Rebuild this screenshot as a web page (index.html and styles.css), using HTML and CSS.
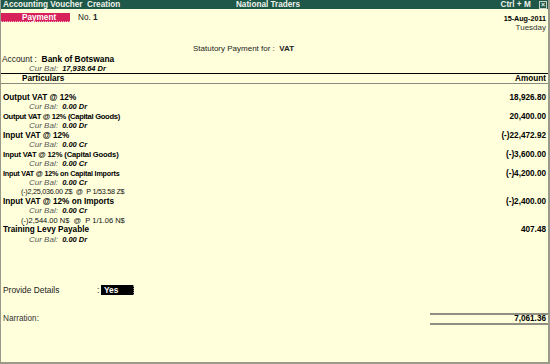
FILE: index.html
```html
<!DOCTYPE html>
<html lang="en">
<head>
  <meta charset="UTF-8" />
  <title>Accounting Voucher Creation</title>
  <link rel="stylesheet" href="styles.css">
</head>
<body>
  <div class="window">
    <div class="titlebar">
      <span class="title-left">Accounting Voucher &nbsp;Creation</span>
      <span class="title-center">National Traders</span>
      <span class="title-right">Ctrl + M <span class="close-box">&times;</span></span>
    </div>

    <div class="voucher-top">
      <div class="vch-left">
        <span class="vch-type">Payment</span>
        <span class="vch-no">No. <b>1</b></span>
      </div>
      <div class="date-block">
        <div class="date">15-Aug-2011</div>
        <div class="day">Tuesday</div>
      </div>
    </div>

    <div class="statutory">Statutory Payment for : &nbsp;<b>VAT</b></div>

    <div class="account">Account : &nbsp;<b>Bank of Botswana</b></div>
    <div class="curbal top-bal"><span class="cb-label">Cur Bal:</span> <span class="cb-value">17,938.64 Dr</span></div>

    <div class="col-head">
      <span class="col-particulars">Particulars</span>
      <span class="col-amount">Amount</span>
    </div>

    <div class="entries">
      <div class="line ledger"><span>Output VAT @ 12%</span><span class="amt">18,926.80</span></div>
      <div class="line curbal"><span class="cb-label">Cur Bal:</span> <span class="cb-value">0.00 Dr</span></div>
      <div class="line ledger"><span class="narrow n1">Output VAT @ 12% (Capital Goods)</span><span class="amt">20,400.00</span></div>
      <div class="line curbal"><span class="cb-label">Cur Bal:</span> <span class="cb-value">0.00 Dr</span></div>
      <div class="line ledger"><span>Input VAT @ 12%</span><span class="amt">(-)22,472.92</span></div>
      <div class="line curbal"><span class="cb-label">Cur Bal:</span> <span class="cb-value">0.00 Cr</span></div>
      <div class="line ledger"><span class="narrow n2">Input VAT @ 12% (Capital Goods)</span><span class="amt">(-)3,600.00</span></div>
      <div class="line curbal"><span class="cb-label">Cur Bal:</span> <span class="cb-value">0.00 Cr</span></div>
      <div class="line ledger"><span class="narrow n3">Input VAT @ 12% on Capital Imports</span><span class="amt">(-)4,200.00</span></div>
      <div class="line curbal"><span class="cb-label">Cur Bal:</span> <span class="cb-value">0.00 Cr</span></div>
      <div class="line forex tight">(-)2,25,036.00 Z$  @  P 1/53.58 Z$</div>
      <div class="line ledger"><span>Input VAT @ 12% on Imports</span><span class="amt">(-)2,400.00</span></div>
      <div class="line curbal"><span class="cb-label">Cur Bal:</span> <span class="cb-value">0.00 Cr</span></div>
      <div class="line forex">(-)2,544.00 N$  @  P 1/1.06 N$</div>
      <div class="line ledger"><span>Training Levy Payable</span><span class="amt">407.48</span></div>
      <div class="line curbal"><span class="cb-label">Cur Bal:</span> <span class="cb-value">0.00 Dr</span></div>
    </div>

    <div class="provide">
      <span class="provide-label">Provide Details</span>
      <span class="provide-colon">:</span>
      <span class="provide-value">Yes</span>
    </div>

    <div class="narration">
      <span class="narration-label">Narration:</span>
      <span class="total">7,061.36</span>
    </div>
  </div>
</body>
</html>
```

FILE: styles.css
```css
body {
  margin: 0;
  background-color: #ffffff;
  font-family: "Liberation Sans", Arial, sans-serif;
  font-size: 8px;
}
.window {
  width: 550px;
  height: 364px;
  box-sizing: border-box;
  background-color: #ffffdb;
  border-left: 1px solid #9a9a8a;
  border-right: 2px solid #9a9a8a;
  border-bottom: 2px solid #9a9a8a;
  color: #000;
  overflow: hidden;
}
.titlebar {
  height: 9px;
  line-height: 9px;
  margin-left: -1px;
  background-color: #1f5748;
  color: #eef2ea;
  font-size: 8.2px;
  font-weight: bold;
  display: grid;
  grid-template-columns: 1fr auto 1fr;
  padding: 0 1px 0 3px;
  white-space: nowrap;
}
.title-center {
  padding-right: 14px;
}
.title-right {
  text-align: right;
}
.close-box {
  display: inline-block;
  width: 6px;
  height: 6px;
  line-height: 5px;
  margin-left: 6px;
  border: 1px solid #c8d0c8;
  font-size: 7px;
  text-align: center;
  vertical-align: 0;
}
.voucher-top {
  height: 35px;
  display: flex;
  justify-content: space-between;
}
.vch-left {
  margin-top: 4px;
  height: 9px;
  line-height: 9px;
  display: flex;
  font-size: 8.2px;
}
.vch-type {
  width: 70px;
  margin-left: -1px;
  padding-left: 22px;
  box-sizing: border-box;
  background-color: #d6215a;
  color: #fff;
  font-weight: bold;
  border-bottom: 1px dotted #f3b0c4;
  height: 9px;
}
.vch-no {
  margin-left: 8px;
  color: #222;
}
.date-block {
  margin-top: 5px;
  padding-right: 2px;
  text-align: right;
}
.date {
  height: 9px;
  line-height: 9px;
  font-size: 7.2px;
  font-weight: bold;
}
.day {
  height: 10px;
  line-height: 10px;
  font-size: 8px;
  color: #333;
}
.statutory {
  height: 10px;
  line-height: 10px;
  padding-left: 192px;
  font-size: 8px;
  color: #222;
}
.account {
  height: 10px;
  line-height: 10px;
  padding-left: 1px;
  font-size: 8.4px;
  color: #222;
}
.account b {
  color: #000;
}
.top-bal {
  height: 9px;
  line-height: 9px;
  padding-left: 21px;
}
.cb-label {
  font-size: 8px;
  font-style: italic;
  color: #555;
}
.cb-value {
  font-size: 7.5px;
  font-style: italic;
  font-weight: bold;
  color: #000;
  margin-left: 2px;
}
.col-head {
  height: 9px;
  line-height: 9px;
  margin-left: -1px;
  border-top: 1px solid #000;
  border-bottom: 1px solid #8a8a80;
  display: flex;
  justify-content: space-between;
  font-size: 8.2px;
  font-weight: bold;
  padding: 0 2px 0 22px;
}
.entries {
  padding-top: 9px;
}
.line {
  height: 9.45px;
  line-height: 9.45px;
  white-space: nowrap;
}
.ledger {
  display: flex;
  justify-content: space-between;
  align-items: center;
  padding: 0 2px 0 2px;
  font-size: 8.2px;
  font-weight: bold;
}
.narrow.n1 {
  font-size: 7.6px;
  letter-spacing: -0.3px;
}
.narrow.n2 {
  font-size: 7.6px;
  letter-spacing: -0.15px;
}
.narrow.n3 {
  font-size: 7.2px;
  letter-spacing: -0.2px;
}
.amt {
  font-size: 8.2px;
}
.curbal {
  padding-left: 28px;
  font-size: 8px;
}
.forex {
  padding-left: 20px;
  font-size: 7.5px;
  white-space: pre;
  color: #111;
}
.forex.tight {
  font-size: 7.2px;
  letter-spacing: -0.25px;
}
.provide {
  margin-top: 41px;
  height: 10px;
  line-height: 10px;
  display: flex;
  font-size: 8.4px;
  color: #222;
}
.provide-label {
  width: 94px;
  padding-left: 2px;
}
.provide-colon {
  width: 4px;
}
.provide-value {
  width: 33px;
  box-sizing: border-box;
  padding-left: 3px;
  background-color: #000;
  color: #fff;
  font-weight: bold;
  border-right: 1px dotted #888;
}
.narration {
  margin-top: 18px;
  height: 12px;
  display: flex;
  justify-content: space-between;
  align-items: center;
  font-size: 8.2px;
}
.narration-label {
  line-height: 10px;
  padding-left: 2px;
  color: #333;
}
.total {
  width: 116px;
  height: 8px;
  line-height: 8px;
  text-align: right;
  padding-right: 2px;
  box-sizing: content-box;
  border-top: 2px solid #8f8f82;
  border-bottom: 2px solid #8f8f82;
  font-weight: bold;
}
```
